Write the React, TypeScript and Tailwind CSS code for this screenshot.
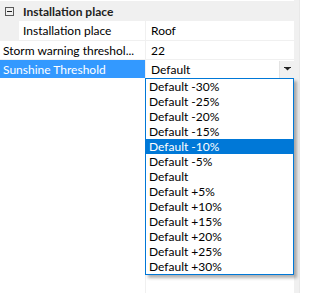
import React from "react";

const options = [
  "Default -30%",
  "Default -25%",
  "Default -20%",
  "Default -15%",
  "Default -10%",
  "Default -5%",
  "Default",
  "Default +5%",
  "Default +10%",
  "Default +15%",
  "Default +20%",
  "Default +25%",
  "Default +30%",
];

function MinusBox() {
  return (
    <svg width="9" height="9" viewBox="0 0 9 9" className="block">
      <rect x="0.5" y="0.5" width="8" height="8" fill="none" stroke="#5a5a5a" />
      <rect x="2" y="4" width="5" height="1" fill="#222" />
    </svg>
  );
}

function ArrowDown() {
  return (
    <svg width="7" height="4" viewBox="0 0 7 4" className="block">
      <rect x="0" y="0" width="7" height="1" fill="#222" />
      <polygon points="1,1 6,1 3.5,3.5" fill="#222" />
    </svg>
  );
}

export default function App() {
  return (
    <div className="relative flex w-[300px] h-[293px] bg-white text-[12px] leading-[15px] text-black font-['Lato','Noto_Sans',sans-serif] overflow-hidden">
      <div className="flex flex-col w-[294px] pt-[1px]">
        {/* category row */}
        <div className="flex items-center h-[20px] bg-[#f0f0f0]">
          <div className="pl-[5px] pr-[9px]">
            <MinusBox />
          </div>
          <span className="font-bold text-[#1e1e1e]">Installation place</span>
        </div>

        {/* property rows */}
        <div className="flex h-[20px] border-b border-[#f0f0f0]">
          <div className="flex items-center w-[146px] border-r border-[#f0f0f0]">
            <div className="w-[19px] h-full bg-[#f0f0f0]" />
            <span className="pl-[4px]">Installation place</span>
          </div>
          <div className="flex items-center flex-1 pl-[5px]">Roof</div>
        </div>

        <div className="flex h-[19px] border-b border-[#f0f0f0]">
          <div className="flex items-center w-[146px] border-r border-[#f0f0f0] pl-[3px] whitespace-nowrap overflow-hidden">
            Storm warning threshol...
          </div>
          <div className="flex items-center flex-1 pl-[5px]">22</div>
        </div>

        <div className="flex h-[18px]">
          <div className="flex items-center w-[146px] bg-[#3399ff] text-white pl-[3px] border-r border-[#f0f0f0]">
            Sunshine Threshold
          </div>
          <div className="flex items-center flex-1 pl-[5px]">
            <span className="flex-1">Default</span>
            <div className="flex items-center justify-center w-[15px] h-[17px] bg-[#f0f0f0] border-l border-[#e3e3e3]">
              <ArrowDown />
            </div>
          </div>
        </div>

        {/* empty remainder */}
        <div className="flex flex-1">
          <div className="w-[146px] border-r border-[#f0f0f0]" />
          <div className="flex-1" />
        </div>
      </div>

      <div className="w-[6px] bg-[#f0f0f0] border-r border-[#e8e8e8]" />

      {/* open dropdown list */}
      <div className="absolute left-[145px] top-[78px] w-[149px] flex flex-col border border-[#0078d7] bg-white shadow-[3px_3px_3px_rgba(0,0,0,0.3)]">
        {options.map((opt) => (
          <div
            key={opt}
            className={`h-[15px] leading-[15px] pl-[3px] whitespace-nowrap ${
              opt === "Default -10%" ? "bg-[#0078d7] text-white" : "text-black"
            }`}
          >
            {opt}
          </div>
        ))}
      </div>
    </div>
  );
}
